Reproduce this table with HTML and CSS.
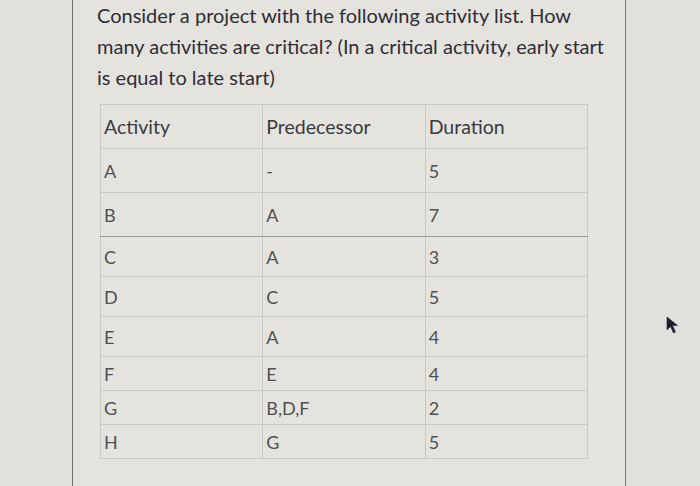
FILE: index.html
```html
<!DOCTYPE html>
<html lang="en">
<head>
    <meta charset="UTF-8">
    <meta name="viewport" content="width=device-width, initial-scale=1.0">
    <title>Critical Activities</title>
    <link rel="stylesheet" href="styles.css">
</head>
<body>
    <div class="card">
        <p class="question">Consider a project with the following activity list. How many activities are critical? (In a critical activity, early start is equal to late start)</p>
        <table class="activities">
            <tr class="tall"><td>Activity</td><td>Predecessor</td><td>Duration</td></tr>
            <tr class="tall"><td>A</td><td>-</td><td>5</td></tr>
            <tr class="tall split"><td>B</td><td>A</td><td>7</td></tr>
            <tr class="mid"><td>C</td><td>A</td><td>3</td></tr>
            <tr class="mid"><td>D</td><td>C</td><td>5</td></tr>
            <tr class="mid"><td>E</td><td>A</td><td>4</td></tr>
            <tr class="short"><td>F</td><td>E</td><td>4</td></tr>
            <tr class="short"><td>G</td><td>B,D,F</td><td>2</td></tr>
            <tr class="short"><td>H</td><td>G</td><td>5</td></tr>
        </table>
    </div>

    <svg class="cursor" width="14" height="18" viewBox="0 0 14 18">
        <path d="M1 1 L1 14 L4.5 10.5 L7.5 17 L9.5 16 L6.5 9.5 L11.5 9.5 Z" fill="#1c1c2a" stroke="#3a3a55" stroke-width="0.8"/>
    </svg>
</body>
</html>
```

FILE: styles.css
```css
body, html {
    margin: 0;
    padding: 0;
    height: 100%;
    background-color: #e2e0da;
    font-family: 'Lato', 'Open Sans', sans-serif;
    overflow: hidden;
}
.card {
    margin-left: 72px;
    width: 554px;
    height: 486px;
    padding-left: 24px;
    box-sizing: border-box;
    border-left: 1px solid #6f6e6c;
    border-right: 1px solid #7a7977;
    background-color: #e5e3de;
}
.question {
    margin: 0;
    width: 520px;
    font-size: 20px;
    line-height: 31px;
    color: #2e2d38;
}
.activities {
    margin: 11px 0 0 3px;
    width: 488px;
    border-collapse: collapse;
    border: 1.5px solid #85858a;
    font-size: 18px;
    color: #505053;
}
.activities td {
    width: 33.3%;
    padding: 0 0 0 3px;
    border: 1px solid #c9c8c4;
    vertical-align: middle;
}
.activities tr:first-child td {
    font-size: 19.5px;
    color: #3a3a3e;
}
.activities tr.tall {
    height: 44px;
}
.activities tr.mid {
    height: 40px;
}
.activities tr.short {
    height: 34px;
}
.activities tr.split td {
    border-bottom: 1.5px solid #9a9a9c;
}
.cursor {
    position: absolute;
    left: 666px;
    top: 316px;
}
```
